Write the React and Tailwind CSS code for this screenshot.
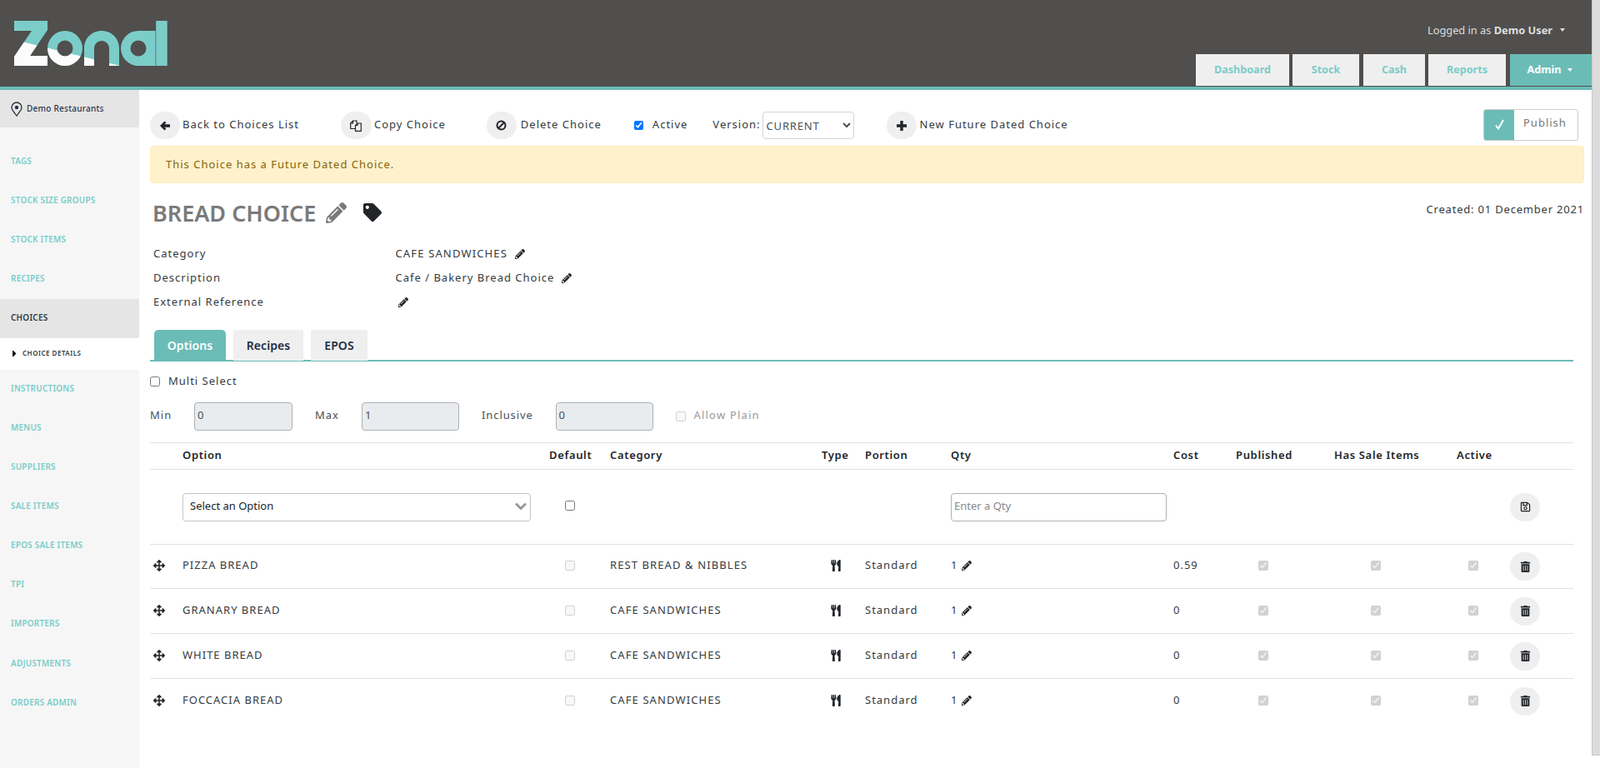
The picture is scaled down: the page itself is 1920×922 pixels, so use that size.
import React from 'react';
import { FaPencilAlt, FaTag, FaArrowsAlt, FaUtensils, FaRegSave, FaTrashAlt, FaCaretRight } from 'react-icons/fa';

const logoShape = (
  <>
    <polygon points="17,25 57,25 57,36 36,67 57,67 57,79 17,79 17,68 38,37 17,37" />
    <path fillRule="evenodd" d="M78 37a21 21 0 1 0 0 42a21 21 0 1 0 0-42ZM78 48.500a9.500 9.500 0 1 1 0 19a9.500 9.500 0 1 1 0-19Z" />
    <path d="M101 79V58C101 46 110 37 122 37C134 37 143 46 143 58V79H131V58C131 53 127 49 122 49C117 49 113 53 113 58V79Z" />
    <path fillRule="evenodd" d="M166 37H186.600V79H166A21 21 0 0 1 166 37ZM166 48.500a9.500 9.500 0 1 0 0 19a9.500 9.500 0 1 0 0-19Z" />
    <rect x="187.200" y="25" width="13.500" height="54" />
  </>
);

function Logo() {
  return (
    <svg className="absolute left-0 top-0" width="220" height="104" viewBox="0 0 220 104">
      <defs>
        <clipPath id="logo-low">
          <polygon points="0,43.500 220,97.800 220,104 0,104" />
        </clipPath>
      </defs>
      <g fill="#7bcdc9">{logoShape}</g>
      <g fill="#fcfcfc" clipPath="url(#logo-low)">{logoShape}</g>
    </svg>
  );
}

function CopyIcon() {
  return (
    <svg width="14" height="14" viewBox="0 0 14 14" fill="none" stroke="#212529" strokeWidth="1.200">
      <path d="M6.500 10.500H.7V4L3.500 1H8V4" />
      <path d="M3.500 1V4H.7" />
      <path d="M6.500 13.400V6.500L9 4H13.300V13.400Z" />
      <path d="M9 4V6.500H6.500" />
    </svg>
  );
}

function ArrowIcon() {
  return (
    <svg width="12" height="12" viewBox="0 0 12 12" fill="#212529">
      <path d="M0 6L5.500 .5L7.500 2.500L5.300 4.300H12V7.700H5.300L7.500 9.500L5.500 11.500Z" />
    </svg>
  );
}

function BanIcon() {
  return (
    <svg width="13" height="13" viewBox="0 0 13 13" fill="none" stroke="#212529" strokeWidth="2">
      <circle cx="6.500" cy="6.500" r="5" />
      <path d="M3 10L10 3" />
    </svg>
  );
}

function PlusIcon() {
  return (
    <svg width="12" height="12" viewBox="0 0 12 12" fill="#212529">
      <path d="M4.300 0h3.400v4.300h4.300v3.400H7.700v4.300H4.300V7.700H0V4.300h4.300z" />
    </svg>
  );
}

function PinIcon() {
  return (
    <svg width="14" height="18" viewBox="0 0 14 18" fill="none">
      <path d="M7 17C4 13 1 10 1 7A6 6 0 0 1 13 7C13 10 10 13 7 17Z" stroke="#2c2c44" strokeWidth="1.300" />
      <circle cx="7" cy="7" r="2.200" fill="#2c2c44" />
    </svg>
  );
}

function Circle({ children, className }) {
  return (
    <span className={"flex h-[33px] items-center justify-center rounded-full bg-[#efefef] text-[#212529] " + className}>{children}</span>
  );
}

const navTabs = [
  ['Dashboard', 'w-[112px]'],
  ['Stock', 'w-[80px] ml-[4px]'],
  ['Cash', 'w-[74px] ml-[5px]'],
  ['Reports', 'w-[93px] ml-[4px]'],
];

const sideTop = ['TAGS', 'STOCK SIZE GROUPS', 'STOCK ITEMS', 'RECIPES'];
const sideBottom = ['INSTRUCTIONS', 'MENUS', 'SUPPLIERS', 'SALE ITEMS', 'EPOS SALE ITEMS', 'TPI', 'IMPORTERS', 'ADJUSTMENTS', 'ORDERS ADMIN'];

const rows = [
  ['PIZZA BREAD', 'REST BREAD & NIBBLES', '0.59', 'h-[53px]'],
  ['GRANARY BREAD', 'CAFE SANDWICHES', '0', 'h-[54px]'],
  ['WHITE BREAD', 'CAFE SANDWICHES', '0', 'h-[54px]'],
  ['FOCCACIA BREAD', 'CAFE SANDWICHES', '0', 'h-[54px]'],
];

const cols = 'grid grid-cols-[39px_440px_73px_254px_52px_103px_267px_75px_118px_147px_64px_40px] items-center';

function SideItem({ label }) {
  return (
    <div className="flex h-[47.100px] items-center pb-[3px] pl-[13px] text-[10px] font-semibold tracking-[0.2px] text-[#7bcdc9]">{label}</div>
  );
}

export default function App() {
  return (
    <div className="flex h-[922px] w-[1920px] overflow-hidden bg-white font-['Open_Sans',sans-serif] text-[13px] tracking-[1px] text-[#343a40]">
      <div className="flex w-[1910px] flex-col">
        <header className="relative h-[108px] shrink-0 border-b-[4px] border-[#6bbcb7] bg-[#504f4d]">
          <Logo />
          <div className="flex h-[65px] items-start justify-end pr-[32px] pt-[27px] text-[12.800px] leading-[18px] tracking-normal text-[#dedede]">
            <span>Logged in as <b className="font-bold">Demo User</b></span>
            <span className="ml-[9px] mt-[7px] h-0 w-0 border-x-[3.500px] border-t-[4px] border-x-transparent border-t-[#dedede]" />
          </div>
          <nav className="flex h-[38px] justify-end text-[12.600px] font-bold tracking-normal">
            {navTabs.map(([t, c]) => (
              <div key={t} className={"flex items-center justify-center bg-[#efefef] text-[#7bcdc9] " + c}>{t}</div>
            ))}
            <div className="ml-[5px] flex w-[98px] items-center justify-center bg-[#6bbcb7] pr-[2px] text-white">
              Admin
              <span className="ml-[8px] h-0 w-0 border-x-[3.500px] border-t-[4px] border-x-transparent border-t-white" />
            </div>
          </nav>
        </header>

        <div className="flex min-h-0 flex-1">
          <aside className="w-[167px] shrink-0 bg-[#f6f6f6]">
            <div className="flex h-[45px] items-center bg-[#e5e5e5] pl-[13px] text-[10px] font-medium tracking-[0.25px] text-[#2c3550]">
              <PinIcon />
              <span className="ml-[5px] mb-[1px]">Demo Restaurants</span>
            </div>
            <div className="h-[18px]" />
            {sideTop.map((s) => <SideItem key={s} label={s} />)}
            <div className="flex h-[47px] items-center bg-[#e5e5e5] pb-[2px] pl-[13px] text-[10px] font-semibold tracking-[0.2px] text-[#343a40]">CHOICES</div>
            <div className="flex h-[38px] items-center bg-white pb-[2px] pl-[11px] text-[8px] font-semibold tracking-[0.5px] text-[#343a40]">
              <FaCaretRight className="text-[13px] text-[#111]" />
              <span className="ml-[3px]">CHOICE DETAILS</span>
            </div>
            {sideBottom.map((s) => <SideItem key={s} label={s} />)}
          </aside>

          <main className="min-w-0 flex-1 pl-[13px]">
            <div className="relative flex h-[33px] items-center mt-[26px] leading-[18px]">
              <Circle className="w-[36px]"><ArrowIcon /></Circle>
              <span className="ml-[3px] mb-[3px]">Back to Choices List</span>
              <Circle className="ml-[50px] w-[37px]"><CopyIcon /></Circle>
              <span className="ml-[3px] mb-[3px]">Copy Choice</span>
              <Circle className="ml-[49px] w-[36px]"><BanIcon /></Circle>
              <span className="ml-[5px] mb-[3px]">Delete Choice</span>
              <input type="checkbox" defaultChecked className="ml-[39px] h-[11px] w-[11px]" />
              <span className="ml-[11px] mb-[3px]">Active</span>
              <span className="ml-[30px] mb-[3px]">Version:</span>
              <select className="ml-[2px] h-[33px] w-[110px] rounded-[4px] border border-[#ced4da] bg-white pl-0 text-[13px] tracking-[0.8px] text-[#495057]">
                <option>CURRENT</option>
              </select>
              <Circle className="ml-[39px] w-[36px]"><PlusIcon /></Circle>
              <span className="ml-[4px] mb-[3px]">New Future Dated Choice</span>
              <div className="ml-auto mr-[16px] flex h-[38px] w-[114px] -translate-y-[1px] items-stretch overflow-hidden rounded-[3px] border border-[#ccc]">
                <span className="flex w-[36px] items-center justify-center bg-[#6bbcb7]">
                  <svg width="11" height="13" viewBox="0 0 11 13" fill="none" stroke="#fff" strokeWidth="2"><path d="M1 7.500L4 11.500L10 1" /></svg>
                </span>
                <span className="flex flex-1 items-center pb-[5px] pl-[11px] text-[#777]">Publish</span>
              </div>
            </div>

            <div className="mr-[9px] mt-[8px] flex h-[45px] items-center rounded-[4px] border border-[#ffeeba] bg-[#fff1cc] pl-[18px] text-[#856404]">This Choice has a Future Dated Choice.</div>

            <div className="mr-[9px] mt-[17px] flex items-start">
              <h1 className="ml-[3px] text-[27px] font-semibold leading-[38px] tracking-normal text-[#7a7a7a]">BREAD CHOICE</h1>
              <FaPencilAlt className="ml-[12px] mt-[6px] text-[25px] text-[#7a7a7a]" />
              <FaTag className="ml-[20px] mt-[7px] text-[22px] text-[#212529]" />
              <span className="ml-auto mt-[5px] leading-[18px] tracking-[0.8px]">Created: 01 December 2021</span>
            </div>

            <div className="mt-[15px] leading-[29px]">
              <div className="flex h-[29px] items-center pl-[4px]"><span className="w-[290.500px]">Category</span><span className="tracking-[1.15px]">CAFE SANDWICHES</span><FaPencilAlt className="ml-[9px] text-[12px] text-[#212529]" /></div>
              <div className="flex h-[29px] items-center pl-[4px]"><span className="w-[290.500px]">Description</span><span>Cafe / Bakery Bread Choice</span><FaPencilAlt className="ml-[9px] text-[12px] text-[#212529]" /></div>
              <div className="flex h-[29px] items-center pl-[4px]"><span className="w-[294px]">External Reference</span><FaPencilAlt className="text-[12px] text-[#212529]" /></div>
            </div>

            <div className="mr-[22px] mt-[19px] flex h-[38px] items-start border-b-2 border-[#6bbcb7] pl-[5px] text-[14px] font-semibold tracking-[0.1px]">
              <div className="flex h-[37px] w-[86px] items-center justify-center rounded-t-[5px] bg-[#6bbcb7] text-white">Options</div>
              <div className="ml-[9px] flex h-[37px] w-[84px] items-center justify-center bg-[#efefef] text-[#1f2d45]">Recipes</div>
              <div className="ml-[9px] flex h-[37px] w-[68px] items-center justify-center bg-[#efefef] text-[#1f2d45]">EPOS</div>
            </div>

            <div className="mt-[14px] flex h-[20px] items-center">
              <input type="checkbox" className="h-[12px] w-[12px]" />
              <span className="ml-[10px] mb-[1px]">Multi Select</span>
            </div>

            <div className="mt-[15px] flex h-[34px] items-center text-[#495057]">
              <span className="w-[53px] mb-[2px]">Min</span>
              <div className="flex h-[34px] w-[118px] items-center rounded-[4px] border border-[#b0b0b0] bg-[#e9ecef] pl-[3px] pb-[2px]">0</div>
              <span className="ml-[27px] w-[56px] mb-[2px]">Max</span>
              <div className="flex h-[34px] w-[117px] items-center rounded-[4px] border border-[#b0b0b0] bg-[#e9ecef] pl-[3px] pb-[2px]">1</div>
              <span className="ml-[27px] w-[88.500px] mb-[2px] tracking-[0.9px]">Inclusive</span>
              <div className="flex h-[34px] w-[117px] items-center rounded-[4px] border border-[#b0b0b0] bg-[#e9ecef] pl-[3px] pb-[2px]">0</div>
              <input type="checkbox" disabled className="ml-[27px] h-[12px] w-[12px]" />
              <span className="ml-[10px] mb-[2px] tracking-[1.2px] text-[#999]">Allow Plain</span>
            </div>

            <div className="mr-[22px] mt-[14px] border-t border-[#dee2e6]">
              <div className={cols + " h-[31px] pb-[2px] font-semibold tracking-[0.65px] text-[#212529]"}>
                <span />
                <span>Option</span>
                <span>Default</span>
                <span>Category</span>
                <span>Type</span>
                <span>Portion</span>
                <span>Qty</span>
                <span>Cost</span>
                <span>Published</span>
                <span>Has Sale Items</span>
                <span>Active</span>
                <span />
              </div>
              <div className={cols + " h-[90px] border-t border-[#dee2e6]"}>
                <span />
                <div className="flex h-[34px] w-[418px] items-center justify-between rounded-[4px] border border-[#c4c4c4] pl-[8px] pr-[4px] pb-[2px] tracking-normal text-[#212529]">
                  Select an Option
                  <svg width="14" height="10" viewBox="0 0 14 10" fill="none" stroke="#999" strokeWidth="3"><path d="M1 1.500L7 7.500L13 1.500" /></svg>
                </div>
                <span className="pl-[19px] pb-[3px]"><input type="checkbox" className="block h-[12px] w-[12px]" /></span>
                <span />
                <span />
                <span />
                <div className="col-span-2 flex h-[34px] w-[259px] items-center rounded-[4px] border border-[#b0b0b0] pl-[3px] pb-[1px] tracking-normal text-[#888]">Enter a Qty</div>
                <span />
                <span />
                <span />
                <Circle className="h-[34px] w-[36px]"><FaRegSave className="text-[13px]" /></Circle>
              </div>
              {rows.map(([name, cat, cost, h]) => (
                <div key={name} className={cols + " border-t border-[#dee2e6] pb-[2px] " + h}>
                  <FaArrowsAlt className="ml-[4px] text-[14px] text-[#212529]" />
                  <span>{name}</span>
                  <span className="pl-[19px]"><input type="checkbox" disabled className="block h-[12px] w-[12px]" /></span>
                  <span className="tracking-[1.1px]">{cat}</span>
                  <FaUtensils className="ml-[10px] text-[14px] text-[#212529]" />
                  <span>Standard</span>
                  <span className="flex items-center">1<FaPencilAlt className="ml-[5px] text-[12px] text-[#212529]" /></span>
                  <span>{cost}</span>
                  <span className="pl-[27px]"><input type="checkbox" disabled defaultChecked className="block h-[12px] w-[12px]" /></span>
                  <span className="pl-[44px]"><input type="checkbox" disabled defaultChecked className="block h-[12px] w-[12px]" /></span>
                  <span className="pl-[14px]"><input type="checkbox" disabled defaultChecked className="block h-[12px] w-[12px]" /></span>
                  <Circle className="mt-[2px] h-[34px] w-[36px]"><FaTrashAlt className="text-[13px]" /></Circle>
                </div>
              ))}
            </div>
          </main>
        </div>
      </div>
      <div className="w-[10px] shrink-0">
        <div className="h-[907px] border-b border-l border-[#c8c8c8] bg-[#dcdcdc]" />
      </div>
    </div>
  );
}
